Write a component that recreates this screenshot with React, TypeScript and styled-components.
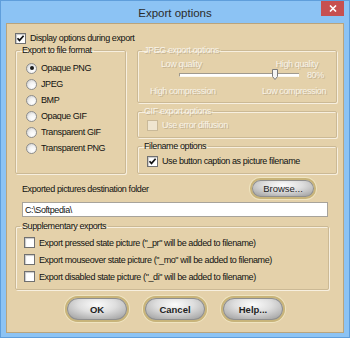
import React from 'react';
import styled, { createGlobalStyle } from 'styled-components';

const Global = createGlobalStyle`
  html, body {
    margin: 0;
    padding: 0;
    background: #8cc3f4;
  }
  * {
    box-sizing: border-box;
  }
`;

const Window = styled.div`
  width: 350px;
  height: 338px;
  display: flex;
  flex-direction: column;
  background: #8cc3f4;
  border: 1px solid #5f9edb;
  padding: 0 5px 4px 5px;
  font-family: "Liberation Sans", Arial, sans-serif;
  font-size: 9px;
  letter-spacing: -0.4px;
  color: #111;
`;

const TitleBar = styled.div`
  position: relative;
  height: 22px;
  display: flex;
  align-items: center;
  justify-content: center;
  font-size: 11.5px;
  letter-spacing: 0;
  color: #2b2b2b;
  padding-top: 1px;
`;

const CloseButton = styled.div`
  position: absolute;
  top: 0;
  right: 0;
  width: 23px;
  height: 15px;
  background: #c75050;
  display: flex;
  align-items: center;
  justify-content: center;
`;

const Content = styled.div`
  flex: 1;
  background: #e4d1aa;
  border: 1px solid #b9a47d;
  padding: 8px 7px 10px 8px;
  display: flex;
  flex-direction: column;
`;

const Row = styled.label<{ $h?: number; $pl?: number }>`
  display: flex;
  align-items: center;
  gap: 4px;
  height: ${p => p.$h ?? 12}px;
  padding-left: ${p => p.$pl ?? 0}px;
  white-space: nowrap;
`;

const Box = styled.span<{ $disabled?: boolean }>`
  width: 11px;
  height: 11px;
  flex: none;
  display: flex;
  align-items: center;
  justify-content: center;
  background: ${p => (p.$disabled ? '#efe5d0' : '#fff')};
  border: 1px solid ${p => (p.$disabled ? '#c9b999' : '#707070')};
  box-shadow: ${p => (p.$disabled ? 'none' : 'inset 1px 1px 1px #c8c8c8')};
`;

const Radio = styled.span<{ $on?: boolean }>`
  width: 11px;
  height: 11px;
  flex: none;
  border-radius: 50%;
  border: 1px solid #8d8d8d;
  background: radial-gradient(circle at 65% 70%, #ffffff 0%, #f2f2f2 45%, #c4c4c4 100%);
  display: flex;
  align-items: center;
  justify-content: center;
  &::after {
    content: '';
    display: ${p => (p.$on ? 'block' : 'none')};
    width: 4px;
    height: 4px;
    border-radius: 50%;
    background: #1b1b1b;
  }
`;

const Dim = styled.span`
  color: #f8f3e8;
  text-shadow: 1px 1px 0 #c4b392;
`;

const Groups = styled.div`
  margin-top: 1px;
  display: grid;
  grid-template-columns: 111px 200px;
  column-gap: 11px;
  height: 129px;
`;

const Group = styled.fieldset<{ $h: number }>`
  margin: 0;
  padding: 0;
  min-width: 0;
  height: ${p => p.$h}px;
  border: 1px solid #cbb995;
  box-shadow: inset 1px 1px 0 #f7efdf, 1px 1px 0 #f7efdf;
  border-radius: 2px;
`;

const Legend = styled.legend`
  margin-left: 4px;
  padding: 0 2px;
  line-height: 11px;
`;

const GroupBody = styled.div<{ $pt: number; $pl: number }>`
  padding: ${p => p.$pt}px 6px 0 ${p => p.$pl}px;
  display: flex;
  flex-direction: column;
`;

const RightCol = styled.div`
  display: flex;
  flex-direction: column;
  justify-content: space-between;
`;

const Scale = styled.div<{ $pl: number; $pr: number; $mt?: number }>`
  display: flex;
  justify-content: space-between;
  align-items: center;
  height: 11px;
  padding: 0 ${p => p.$pr}px 0 ${p => p.$pl}px;
  margin-top: ${p => p.$mt ?? 0}px;
`;

const SliderRow = styled.div`
  display: flex;
  align-items: center;
  height: 12px;
  padding-left: 41px;
  gap: 8px;
`;

const Track = styled.div`
  position: relative;
  width: 120px;
  height: 4px;
  background: #fff;
  border-top: 1px solid #a09a8e;
  border-left: 1px solid #a09a8e;
  border-bottom: 1px solid #fbf8f0;
`;

const Thumb = styled.svg`
  position: absolute;
  left: 92px;
  top: -5px;
`;

const FolderRow = styled.div`
  margin-top: 4px;
  height: 21px;
  display: flex;
  align-items: center;
  justify-content: space-between;
  padding: 0 20px 0 7px;
`;

const PillButton = styled.button<{ $w: number; $h: number; $bold?: boolean }>`
  width: ${p => p.$w}px;
  height: ${p => p.$h}px;
  padding: 0;
  border-radius: ${p => p.$h / 2}px;
  border: 2px solid #c8b47a;
  box-shadow: 0 0 0 1px #efe4c0, inset 0 0 0 1px #8f8f8f;
  background: radial-gradient(ellipse 70% 80% at 50% 30%, #fbfbfb 0%, #dedede 45%, #a2a2a2 100%);
  font-family: "Liberation Sans", Arial, sans-serif;
  font-size: 9.5px;
  letter-spacing: 0;
  font-weight: ${p => (p.$bold ? 700 : 400)};
  color: #1e1e1e;
  display: flex;
  align-items: center;
  justify-content: center;
`;

const PathInput = styled.div`
  margin: 3px 8px 0 7px;
  height: 15px;
  background: #fff;
  border: 1px solid #a7a39b;
  padding-left: 2px;
  display: flex;
  align-items: center;
`;

const Supplementary = styled(Group)`
  margin-top: 4px;
  margin-right: 7px;
`;

const Buttons = styled.div`
  margin-top: 6px;
  display: flex;
  justify-content: center;
  gap: 14px;
  padding-right: 1px;
`;

const Check = () => (
  <svg width="9" height="9" viewBox="0 0 9 9">
    <path d="M1.5 4.2 L3.5 6.4 L7.6 1.8" fill="none" stroke="#111" strokeWidth="1.7" />
  </svg>
);

const formats = ['Opaque PNG', 'JPEG', 'BMP', 'Opaque GIF', 'Transparent GIF', 'Transparent PNG'];
const extras = [
  'Export pressed state picture ("_pr" will be added to filename)',
  'Export mouseover state picture ("_mo" will be added to filename)',
  'Export disabled state picture ("_di" will be added to filename)',
];

export default function App() {
  return (
    <>
      <Global />
      <Window>
        <TitleBar>
          Export options
          <CloseButton>
            <svg width="8" height="7" viewBox="0 0 8 7">
              <path d="M1 0.5 L7 6.5 M7 0.5 L1 6.5" stroke="#fff" strokeWidth="1.6" />
            </svg>
          </CloseButton>
        </TitleBar>
        <Content>
          <Row>
            <Box><Check /></Box>
            Display options during export
          </Row>
          <Groups>
            <Group $h={129}>
              <Legend>Export to file format</Legend>
              <GroupBody $pt={4} $pl={10}>
                {formats.map((f, i) => (
                  <Row key={f} $h={16}>
                    <Radio $on={i === 0} />
                    {f}
                  </Row>
                ))}
              </GroupBody>
            </Group>
            <RightCol>
              <Group $h={58}>
                <Legend><Dim>JPEG export options</Dim></Legend>
                <GroupBody $pt={2} $pl={0}>
                  <Scale $pl={23} $pr={12}>
                    <Dim>Low quality</Dim>
                    <Dim>High quality</Dim>
                  </Scale>
                  <SliderRow>
                    <Track>
                      <Thumb width="6" height="11" viewBox="0 0 6 11">
                        <path d="M0.5 0.5 H5.5 V7.5 L3 10.5 L0.5 7.5 Z" fill="#f4f4f4" stroke="#7b7b7b" />
                      </Thumb>
                    </Track>
                    <Dim>80%</Dim>
                  </SliderRow>
                  <Scale $pl={12} $pr={4} $mt={4}>
                    <Dim>High compression</Dim>
                    <Dim>Low compression</Dim>
                  </Scale>
                </GroupBody>
              </Group>
              <Group $h={32}>
                <Legend><Dim>GIF export options</Dim></Legend>
                <GroupBody $pt={2} $pl={9}>
                  <Row>
                    <Box $disabled />
                    <Dim>Use error diffusion</Dim>
                  </Row>
                </GroupBody>
              </Group>
              <Group $h={33}>
                <Legend>Filename options</Legend>
                <GroupBody $pt={3} $pl={9}>
                  <Row>
                    <Box><Check /></Box>
                    Use button caption as picture filename
                  </Row>
                </GroupBody>
              </Group>
            </RightCol>
          </Groups>
          <FolderRow>
            <span>Exported pictures destination folder</span>
            <PillButton $w={66} $h={21}>Browse...</PillButton>
          </FolderRow>
          <PathInput>C:\Softpedia\</PathInput>
          <Supplementary $h={69}>
            <Legend>Supplementary exports</Legend>
            <GroupBody $pt={2} $pl={8}>
              {extras.map(t => (
                <Row key={t} $h={17}>
                  <Box />
                  {t}
                </Row>
              ))}
            </GroupBody>
          </Supplementary>
          <Buttons>
            <PillButton $w={64} $h={26} $bold>OK</PillButton>
            <PillButton $w={64} $h={26} $bold>Cancel</PillButton>
            <PillButton $w={64} $h={26} $bold>Help...</PillButton>
          </Buttons>
        </Content>
      </Window>
    </>
  );
}
